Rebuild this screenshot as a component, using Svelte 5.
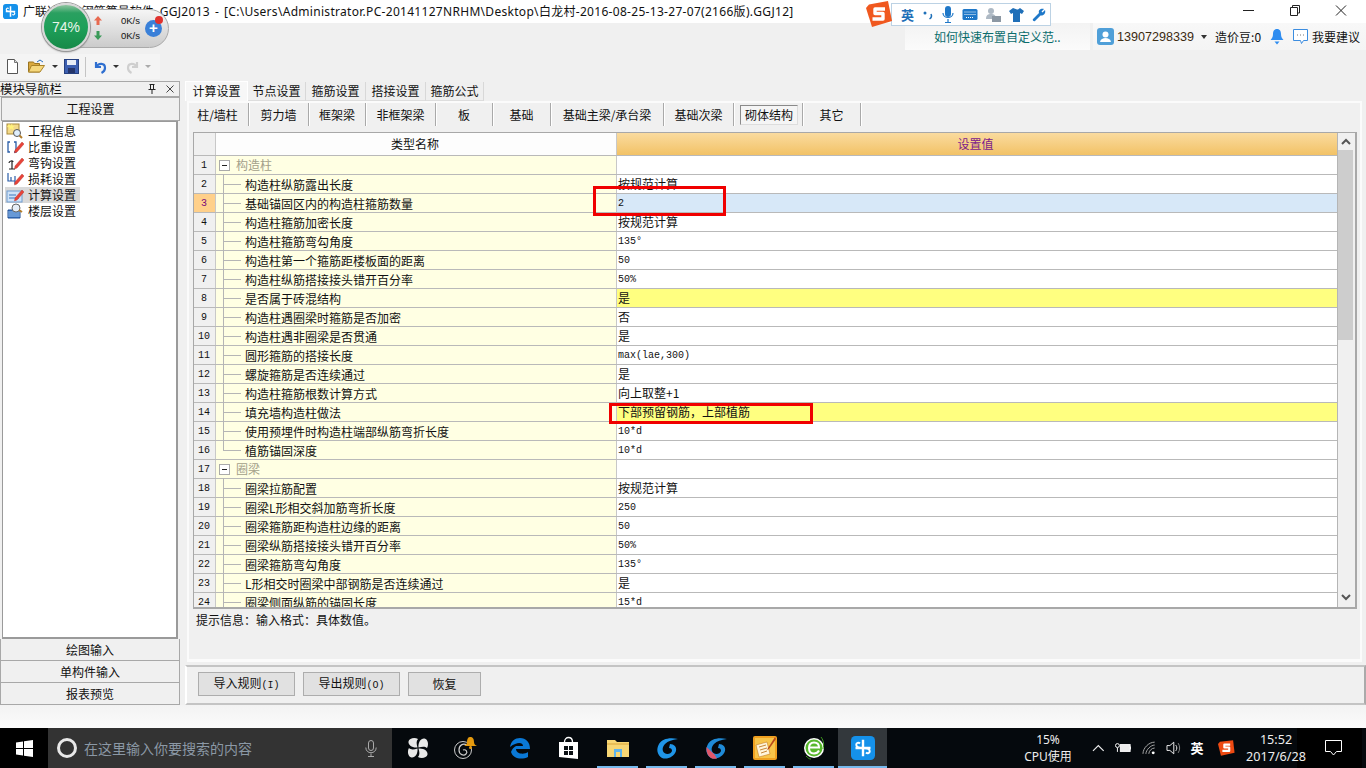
<script lang="ts">
	const tabs = ['计算设置', '节点设置', '箍筋设置', '搭接设置', '箍筋公式'];
	const tabWidths = [63, 57, 59, 59, 57];

	const subTabs = [
		['柱/墙柱', 62], ['剪力墙', 60], ['框架梁', 57], ['非框架梁', 70], ['板', 57],
		['基础', 58], ['基础主梁/承台梁', 113], ['基础次梁', 70], ['砌体结构', 69], ['其它', 58]
	] as const;

	const rows = [
		{ name: '构造柱', group: true },
		{ name: '构造柱纵筋露出长度', val: '按规范计算' },
		{ name: '基础锚固区内的构造柱箍筋数量', val: '2', mono: true, sel: true },
		{ name: '构造柱箍筋加密长度', val: '按规范计算' },
		{ name: '构造柱箍筋弯勾角度', val: '135°', mono: true },
		{ name: '构造柱第一个箍筋距楼板面的距离', val: '50', mono: true },
		{ name: '构造柱纵筋搭接接头错开百分率', val: '50%', mono: true },
		{ name: '是否属于砖混结构', val: '是', hot: true },
		{ name: '构造柱遇圈梁时箍筋是否加密', val: '否' },
		{ name: '构造柱遇非圈梁是否贯通', val: '是' },
		{ name: '圆形箍筋的搭接长度', val: 'max(lae,300)', mono: true },
		{ name: '螺旋箍筋是否连续通过', val: '是' },
		{ name: '构造柱箍筋根数计算方式', val: '向上取整+1' },
		{ name: '填充墙构造柱做法', val: '下部预留钢筋，上部植筋', hot: true },
		{ name: '使用预埋件时构造柱端部纵筋弯折长度', val: '10*d', mono: true },
		{ name: '植筋锚固深度', val: '10*d', mono: true, last: true },
		{ name: '圈梁', group: true },
		{ name: '圈梁拉筋配置', val: '按规范计算' },
		{ name: '圈梁L形相交斜加筋弯折长度', val: '250', mono: true },
		{ name: '圈梁箍筋距构造柱边缘的距离', val: '50', mono: true },
		{ name: '圈梁纵筋搭接接头错开百分率', val: '50%', mono: true },
		{ name: '圈梁箍筋弯勾角度', val: '135°', mono: true },
		{ name: 'L形相交时圈梁中部钢筋是否连续通过', val: '是' },
		{ name: '圈梁侧面纵筋的锚固长度', val: '15*d', mono: true }
	];

	const navItems = ['工程信息', '比重设置', '弯钩设置', '损耗设置', '计算设置', '楼层设置'];
</script>

{#snippet appIcon(size)}
	<svg width={size} height={size} viewBox="0 0 16 16">
		<rect width="16" height="16" rx="3" fill="#1591ea" />
		<path d="M8 2.500v11M3 8h10" stroke="#fff" stroke-width="1.600" fill="none" />
		<path d="M8 8C5 8 3.500 7 3.500 5.800S5 4 6 5M8 8c3 0 4.500 1 4.500 2.200S11 12 10 11" stroke="#fff" stroke-width="1.300" fill="none" />
	</svg>
{/snippet}

{#snippet pencil()}
	<path d="M9 11 L16 3 L18 5 L11 13 L8.500 14Z" fill="#e8443a" stroke="#b02a20" stroke-width=".4" />
{/snippet}

{#snippet navIcon(i)}
	<svg width="18" height="16" viewBox="0 0 18 16">
		{#if i === 0}
			<rect x="1" y="1" width="12" height="10" fill="#f3d98a" stroke="#a98a3a" />
			<path d="M3 1l1.500 2L6 .5 6.500 3 9 2.500 7 4.500 8 7 5 5.500 3 7.500 3.500 4.500 1 4Z" fill="#fff27a" />
			<circle cx="11" cy="10" r="3.500" fill="#dfeefc" stroke="#555" />
			<path d="M13.500 12.500L16 15" stroke="#b27d2a" stroke-width="2" />
		{:else if i === 1}
			<path d="M4 3H2v10h2M8 3h2v10H8" stroke="#2a5da8" stroke-width="1.300" fill="none" />
			{@render pencil()}
		{:else if i === 2}
			<path d="M6 6v8M3 14h6M3 8c0-2 4-3 4-1" stroke="#222" stroke-width="1.200" fill="none" />
			{@render pencil()}
		{:else if i === 3}
			<path d="M2 2v8h3V6M5 10h4V5v8" stroke="#2a5da8" stroke-width="1.200" fill="none" />
			{@render pencil()}
		{:else if i === 4}
			<rect x="1" y="4" width="15" height="11" fill="#cfe3f8" stroke="#6f9cd0" />
			<path d="M3 8h7M3 11h10" stroke="#3d76bd" />
			{@render pencil()}
		{:else}
			<path d="M2 7h12v8H2Z" fill="#3a78c8" stroke="#1f4f96" />
			<path d="M2 9h12M2 11h12M2 13h12" stroke="#bcd6f2" stroke-width=".7" />
			<circle cx="10" cy="5" r="4" fill="#e6eef7" stroke="#666" />
			<path d="M13 7l3 2" stroke="#b27d2a" stroke-width="2" />
		{/if}
	</svg>
{/snippet}

<div class="page">
	<header class="titlebar">
		<span class="app-icon">{@render appIcon(15)}</span>
		<span class="title"><span class="title-cn">广联达BIM钢筋算量软件</span> GGJ2013 - [C:\Users\Administrator.PC-20141127NRHM\Desktop\白龙村-2016-08-25-13-27-07(2166版).GGJ12]</span>
		<div class="winbtns">
			<svg width="46" height="23" viewBox="0 0 46 23"><path d="M17 10.500h11" stroke="#222" /></svg>
			<svg width="46" height="23" viewBox="0 0 46 23"><path d="M18.500 7.500h7v8h-7ZM20.500 7V5.500h7V13h-2" stroke="#222" fill="none" /></svg>
			<svg width="46" height="23" viewBox="0 0 46 23"><path d="M18 5.500l10 10M28 5.500l-10 10" stroke="#222" /></svg>
		</div>
	</header>

	<div class="band">
		<div class="link-box">如何快速布置自定义范..</div>
		<div class="user-box">
			<svg class="avatar" width="17" height="17" viewBox="0 0 17 17">
				<rect width="17" height="17" rx="3" fill="#4f9fd8" />
				<circle cx="8.500" cy="6.500" r="3" fill="#fff" />
				<path d="M3 14c.5-3 3-4 5.500-4s5 1 5.500 4Z" fill="#fff" />
			</svg>
			<span class="phone">13907298339</span>
			<span class="caret"></span>
			<span class="beans">造价豆:0</span>
			<svg class="bell" width="14" height="17" viewBox="0 0 14 17">
				<path d="M7 1c3 0 4 2.500 4 5 0 3 1 4.500 2.500 6H.5C2 10.500 3 9 3 6c0-2.500 1-5 4-5Z" fill="#2f8df0" />
				<path d="M4.500 13.500h5L7 16.500Z" fill="#2f8df0" />
			</svg>
			<svg class="note" width="17" height="17" viewBox="0 0 17 17">
				<path d="M1.500 1.500h14v11h-4l-2 3-1-3h-7Z" fill="#fff" stroke="#3c8de0" />
				<path d="M5 7h1M8 7h1M11 7h1" stroke="#777" />
			</svg>
			<span>我要建议</span>
		</div>
	</div>

	<div class="toolbar">
		<div class="tools">
			<svg width="13" height="15" viewBox="0 0 13 15"><path d="M1.500 .5h7l3 3v11h-10Z" fill="#fff" stroke="#555" /><path d="M8.500 .5v3h3" fill="#ddd" stroke="#777" /></svg>
			<svg class="gap-open" width="17" height="15" viewBox="0 0 17 15"><path d="M.5 3h5l1 1.500h5V13H.5Z" fill="#d9a93f" stroke="#9a7420" /><path d="M.5 13l3-6.500h13L12 13Z" fill="#f5d77c" stroke="#a98228" /><path d="M9 3l3-2 3 2" stroke="#2a70c0" fill="none" /></svg>
			<span class="drop d1"></span>
			<svg class="gap-save" width="15" height="15" viewBox="0 0 15 15"><rect x=".5" y=".5" width="14" height="14" fill="#3d5fb0" stroke="#26407f" /><rect x="3" y="1" width="9" height="5" fill="#e8edf6" /><rect x="4" y="9" width="7" height="5" fill="#25356a" /></svg>
			<span class="tool-sep"></span>
			<svg class="gap-undo" width="13" height="14" viewBox="0 0 13 14"><path d="M2 2v5h5M2.500 7C4 3 11 2.500 11 8c0 2-1.500 4-3.500 5" stroke="#2f6fd0" stroke-width="2.200" fill="none" /></svg>
			<span class="drop d2"></span>
			<svg class="gap-redo" width="13" height="14" viewBox="0 0 13 14"><path d="M11 2v5H6M10.500 7C9 3 2 2.500 2 8c0 2 1.500 4 3.500 5" stroke="#cfcfcf" stroke-width="2.200" fill="none" /></svg>
			<span class="drop d3"></span>
		</div>
	</div>

	<main class="main">
		<aside class="nav">
			<div class="nav-head">
				<span>模块导航栏</span>
				<svg width="12" height="12" viewBox="0 0 12 12"><path d="M3.500 1.500h5M4.500 1.500v5h3v-5M2.500 6.500h7M6 6.500V11" stroke="#222" fill="none" /></svg>
				<svg width="12" height="12" viewBox="0 0 12 12"><path d="M2.500 2.500l7 7M9.500 2.500l-7 7" stroke="#444" /></svg>
			</div>
			<div class="nav-btn first">工程设置</div>
			<ul class="nav-list">
				{#each navItems as item, i}
					<li class:on={i === 4}>
						<span class="nav-ico">{@render navIcon(i)}</span>
						<span class="nav-txt">{item}</span>
					</li>
				{/each}
			</ul>
			<div class="nav-btn">绘图输入</div>
			<div class="nav-btn">单构件输入</div>
			<div class="nav-btn">报表预览</div>
		</aside>

		<section class="work">
			<div class="tabs">
				{#each tabs as t, i}
					<div class="tab" class:active={i === 0} style="width:{tabWidths[i]}px">{t}</div>
				{/each}
			</div>
			<div class="panel">
				<div class="subtabs">
					{#each subTabs as [label, w]}
						<div class="subtab" style="width:{w}px">
							<span class:pressed={label === '砌体结构'}>{label}</span>
						</div>
					{/each}
				</div>
				<div class="grid">
					<div class="table">
						<div class="row head">
							<div class="num"></div>
							<div class="name-h">类型名称</div>
							<div class="val-h">设置值</div>
						</div>
						{#each rows as r, i}
							<div class="row">
								<div class="num" class:num-sel={r.sel}>{i + 1}</div>
								<div class="name">
									{#if r.group}
										<span class="minus"></span>
										<span class="group-txt">{r.name}</span>
									{:else}
										<span class="tree" class:tree-last={r.last}></span>
										<span class="name-txt">{r.name}</span>
									{/if}
								</div>
								<div class="val" class:sel={r.sel} class:hot={r.hot} class:mono={r.mono}>{r.val ?? ''}</div>
							</div>
						{/each}
					</div>
					<div class="scroll">
						<svg width="16" height="17" viewBox="0 0 16 17"><path d="M4 11l4-4 4 4" stroke="#555" stroke-width="2" fill="none" /></svg>
						<div class="thumb"></div>
						<svg class="down" width="16" height="18" viewBox="0 0 16 18"><path d="M4 6l4 4 4-4" stroke="#555" stroke-width="2" fill="none" /></svg>
					</div>
				</div>
				<div class="hint">提示信息：输入格式：具体数值。</div>
			</div>
			<div class="actions">
				<button class="b1">导入规则<span class="mono-s">(I)</span></button>
				<button class="b2">导出规则<span class="mono-s">(O)</span></button>
				<button class="b3">恢复</button>
			</div>
		</section>
	</main>

	<div class="strip"></div>

	<footer class="taskbar">
		<div class="start">
			<svg width="17" height="17" viewBox="0 0 17 17"><path d="M0 2.500l7-1V8H0ZM8 1.300 17 0v8H8ZM0 9h7v6.500l-7-1ZM8 9h9v8l-9-1.300Z" fill="#fff" /></svg>
		</div>
		<div class="search">
			<span class="cortana"></span>
			<span class="search-txt">在这里输入你要搜索的内容</span>
			<svg class="mic" width="12" height="17" viewBox="0 0 12 17"><rect x="3.500" y=".5" width="5" height="10" rx="2.500" fill="none" stroke="#aaa" /><path d="M.8 7.500c0 7 10.400 7 10.400 0M6 13.500V16M3 16.500h6" stroke="#aaa" fill="none" /></svg>
		</div>
		<div class="apps">
			<div class="app">
				<svg width="22" height="22" viewBox="0 0 22 22"><path d="M10.500 10.500C5 11 1 8 1.500 4.500 2 1 8 0 11 2c-2 2-1.500 5-.5 8.500ZM11.500 10.500C11 5 14 1 17.500 1.500 21 2 22 8 20 11c-2-2-5-1.500-8.500-.5ZM11.500 11.500c5.500-.5 9.500 2.500 9 6-.5 3.500-6.500 4.500-9.500 2.500 2-2 1.500-5 .5-8.500ZM10.500 11.500c.5 5.500-2.500 9.500-6 9C1 20 0 14 2 11c2 2 5 1.500 8.500.5Z" fill="#e8e8e8" /></svg>
			</div>
			<div class="app">
				<svg width="28" height="24" viewBox="0 0 28 24"><circle cx="10" cy="14" r="8.500" fill="none" stroke="#ccc" /><path d="M14 9c-4-2-8 0-8 5s5 6 7 4 0-5-3-4" fill="none" stroke="#ccc" stroke-width="1.200" /><path d="M17 1c3 0 4 2 4 5 0 2 1 3 3 4H11c2-1 3-2 3-4 0-3 1-5 3-5Z" fill="#e59a0e" /><circle cx="17.500" cy="11.500" r="1.500" fill="#e59a0e" /></svg>
			</div>
			<div class="app g2">
				<svg width="21" height="21" viewBox="0 0 21 21"><path d="M1 9C2 3 6 0 11 0c6 0 10 4 10 11H7c0 5 8 6 12 3v5c-6 3-15 2-17-5 1-3 3-5 5-6h7c0-3-5-5-13 1Z" fill="#0a78d6" /></svg>
			</div>
			<div class="app">
				<svg width="21" height="24" viewBox="0 0 21 24"><path d="M1 6h19v17L1 21Z" fill="#fff" /><path d="M6.500 6C6.500 0 14.500 0 14.500 6" fill="none" stroke="#fff" stroke-width="1.300" /><path d="M6 10h4v4H6ZM11 10h4v4h-4ZM6 15h4v4H6ZM11 15h4v4h-4Z" fill="#0b1014" /></svg>
			</div>
			<div class="app">
				<svg width="22" height="18" viewBox="0 0 22 18"><path d="M0 1h8l2 2h12v15H0Z" fill="#f7d674" /><path d="M0 4h22v2H0Z" fill="#e8bd56" /><path d="M7 10h8v8H7Z" fill="#5fb4ec" /><path d="M9 13h4v5H9Z" fill="#f7d674" /></svg>
			</div>
			<div class="app">
				<svg width="24" height="24" viewBox="0 0 24 24"><path d="M23 3C14 1 7 3 4 8 1 13 2 19 7 22c5 2 12-1 14-7 1-4-2-7-6-7l-1 4c2 0 3 1 3 3-1 3-5 4-7.500 2C7 15 7 11 10 8c3-3 7-4 13-5Z" fill="#1f95e8" /></svg>
			</div>
			<div class="app">
				<svg width="24" height="24" viewBox="0 0 24 24"><path d="M23 3C14 1 7 3 4 8 1 13 2 19 7 22c5 2 12-1 14-7 1-4-2-7-6-7l-1 4c2 0 3 1 3 3-1 3-5 4-7.500 2C7 15 7 11 10 8c3-3 7-4 13-5Z" fill="#1f8bd8" /><path d="M2.500 11l8 7.500L13 22.500C11 23 9 23 7 22 3.500 20 2 15 2.500 11Z" fill="#e0576a" /></svg>
			</div>
			<div class="app">
				<svg width="24" height="24" viewBox="0 0 24 24"><rect width="24" height="24" rx="2" fill="#f0a020" /><rect x="2" y="2" width="20" height="20" fill="#f7c44a" /><path d="M3 9l11-3 3 12-11 3Z" fill="#fff5da" stroke="#b86a10" stroke-width=".5" /><path d="M6 11l7-2M7 14l7-2M8 17l6-2" stroke="#b86a10" stroke-width=".8" /><path d="M22 1l-7 11-1 2 2-1L23 3Z" fill="#b8481a" /></svg>
			</div>
			<div class="app">
				<svg width="22" height="24" viewBox="0 0 22 24"><circle cx="11" cy="12" r="10" fill="#fff" /><circle cx="11" cy="12" r="8.500" fill="#58b82c" /><path d="M6 11.500h10c0-4-2-5-5-5-3 0-5 2-5 5.500s2 5.500 5 5.500c2 0 4-1 5-3" fill="none" stroke="#fff" stroke-width="2" /><path d="M18 1c3 4 3 8 2 12M3 20c2 2 3 3 5 3" stroke="#3f9a20" fill="none" /></svg>
			</div>
			<div class="app current">
				<span class="cur-ico">{@render appIcon(24)}</span>
			</div>
		</div>
		<div class="cpu"><span>15%</span><span>CPU使用</span></div>
		<div class="tray">
			<svg width="13" height="8" viewBox="0 0 13 8"><path d="M1 7l5.500-5.500L12 7" stroke="#eee" stroke-width="1.200" fill="none" /></svg>
			<svg class="t-bat" width="17" height="12" viewBox="0 0 17 12"><circle cx="2.500" cy="3.500" r="2" fill="none" stroke="#fff" /><path d="M2.500 6v4" stroke="#fff" /><rect x="5.500" y="2.500" width="10" height="7" fill="#eee" stroke="#fff" /><path d="M16 4.500v3" stroke="#fff" /></svg>
			<svg class="t-wifi" width="14" height="14" viewBox="0 0 14 14"><path d="M1 13C1 7 7 1 13 1M4 13c0-4 5-9 9-9M7 13c0-3 3-6 6-6" stroke="#aaa" fill="none" /><circle cx="11.500" cy="12" r="1.500" fill="#fff" /></svg>
			<svg class="t-vol" width="16" height="14" viewBox="0 0 16 14"><path d="M1 4.500h3l4-3.500v12L4 9.500H1Z" fill="none" stroke="#eee" /><path d="M10 4c1.500 2 1.500 4 0 6" stroke="#eee" fill="none" /><path d="M12.500 2c2 3 2 7 0 10" stroke="#888" fill="none" /></svg>
			<span class="t-ime">英</span>
			<svg class="t-s" width="17" height="16" viewBox="0 0 17 16"><path d="M2 1.500L15.500 0 17 13 3 16 0 4Z" fill="#ee4a12" /><path d="M12.500 4.500H6.500v3h5v3.500H4.500" stroke="#fff" stroke-width="2.200" fill="none" stroke-linejoin="round" /></svg>
		</div>
		<div class="clock"><span>15:52</span><span>2017/6/28</span></div>
		<div class="notify">
			<svg width="17" height="16" viewBox="0 0 17 16"><path d="M.5.5h16v11h-5l-3 3.500-3-3.500h-5Z" fill="none" stroke="#fff" /></svg>
		</div>
	</footer>

	<!-- 悬浮的东西 -->
	<div class="meter">
		<div class="pill">
			<div class="speed-row">
				<svg width="8" height="9" viewBox="0 0 8 9"><path d="M4 0l4 4.500H5.500V9h-3V4.500H0Z" fill="#e86a50" /></svg>
				<span>0K/s</span>
			</div>
			<div class="speed-row">
				<svg width="8" height="9" viewBox="0 0 8 9"><path d="M4 9L0 4.500h2.500V0h3v4.500H8Z" fill="#3a9a58" /></svg>
				<span>0K/s</span>
			</div>
			<div class="plus">+<i></i></div>
		</div>
		<div class="ball">74%</div>
	</div>

	<div class="ime">
		<svg class="ime-s" width="26" height="26" viewBox="0 0 26 26"><path d="M3 3.500L22 0l4 20-20 6L0 7Z" fill="#f0581f" /><path d="M19 8H9v4.500h8V18H6.500" stroke="#fff" stroke-width="3.400" fill="none" stroke-linejoin="round" /></svg>
		<div class="ime-bar">
			<span class="ime-en">英</span>
			<svg width="12" height="12" viewBox="0 0 12 12"><circle cx="3" cy="4" r="1.500" fill="#1f70b8" /><path d="M9 5c1 2 0 4-1.500 5" stroke="#1f70b8" stroke-width="1.500" fill="none" /></svg>
			<svg width="12" height="17" viewBox="0 0 12 17"><rect x="3" y="0" width="6" height="11" rx="3" fill="#1f78c8" /><path d="M1 7c0 6 10 6 10 0M6 13v3M3 16.500h6" stroke="#1f78c8" fill="none" stroke-width="1.200" /></svg>
			<svg width="16" height="13" viewBox="0 0 16 13"><rect x=".5" y="1" width="15" height="11" rx="1.500" fill="#1f78c8" /><path d="M2.500 4h11M2.500 6.500h11M4 9.500h8" stroke="#fff" stroke-dasharray="1 1" /></svg>
			<svg width="16" height="16" viewBox="0 0 16 16"><circle cx="6" cy="4" r="3" fill="#aeb9c4" /><path d="M1 12c0-4 2-5 5-5s5 1 5 5Z" fill="#aeb9c4" /><rect x="7" y="9" width="9" height="6" fill="#8c98a4" /></svg>
			<svg width="15" height="14" viewBox="0 0 15 14"><path d="M4 0L0 3l2 3 2-1v9h7V5l2 1 2-3-4-3-2 1.500h-1Z" fill="#1f6fb8" /></svg>
			<svg width="14" height="14" viewBox="0 0 14 14"><path d="M1 11l6-6c-1-3 2-5 5-4L9.500 3.500l1 1L13 2c1 3-1 6-4.500 5.500L3 13c-1 1-3-1-2-2Z" fill="#1f78c8" /></svg>
		</div>
	</div>

	<div class="mark mark-a"></div>
	<div class="mark mark-b"></div>
</div>

<style>
	:global(body) {
		margin: 0;
		background: #f0f0f0;
	}

	.page {
		position: relative;
		width: 1366px;
		height: 768px;
		overflow: hidden;
		display: flex;
		flex-direction: column;
		background: #f0f0f0;
		color: #111;
		font-family: "Noto Sans CJK SC", "Liberation Sans", sans-serif;
		font-size: 12px;
		line-height: 18px;
	}

	/* 标题栏 */
	.titlebar {
		height: 23px;
		flex: none;
		display: flex;
		align-items: center;
		background: #fff;
		padding-left: 3px;
	}
	.app-icon {
		display: flex;
		width: 20px;
	}
	.title {
		font-size: 12px;
		white-space: pre;
		font-family: "Noto Sans", "Noto Sans CJK SC", sans-serif;
		letter-spacing: 0.3px;
		word-spacing: 1.5px;
	}
	.title-cn {
		letter-spacing: 0;
		margin-right: 1px;
	}
	.winbtns {
		margin-left: auto;
		display: flex;
		padding-right: 2px;
	}

	.band {
		height: 28px;
		flex: none;
		display: flex;
		justify-content: flex-end;
	}
	.link-box {
		width: 156px;
		padding-left: 29px;
		margin-right: 3px;
		height: 27px;
		line-height: 28px;
		color: #0b6d6d;
		background: linear-gradient(#f3f3f3, #fbfbfb);
	}
	.user-box {
		width: 273px;
		height: 27px;
		display: flex;
		align-items: center;
		padding-left: 4px;
		box-sizing: border-box;
		background: linear-gradient(#f8f8f8, #f4f4f4);
	}
	.phone {
		margin-left: 3px;
		font-family: "Liberation Sans", sans-serif;
		font-size: 12.6px;
		color: #3c2a10;
	}
	.caret {
		margin-left: 7px;
		border: 3px solid transparent;
		border-top: 4px solid #333;
		border-bottom: 0;
	}
	.beans {
		margin-left: 8px;
	}
	.bell {
		margin-left: 9px;
	}
	.note {
		margin-left: 8px;
		margin-right: 3px;
	}

	.toolbar {
		height: 29px;
		flex: none;
		padding-top: 3px;
		box-sizing: border-box;
	}
	.tools {
		width: 160px;
		height: 25px;
		display: flex;
		align-items: center;
		background: #f4f4f4;
		padding-left: 6px;
		box-sizing: border-box;
	}
	.gap-open {
		margin-left: 9px;
	}
	.drop {
		border: 3px solid transparent;
		border-top: 3px solid #333;
		border-bottom: 0;
		margin-left: 6px;
	}
	.d1 {
		margin-left: 7px;
	}
	.d3 {
		border-top-color: #aaa;
	}
	.gap-save {
		margin-left: 6px;
	}
	.tool-sep {
		width: 1px;
		height: 20px;
		background: #c4c4c4;
		margin: 0 8px 0 6px;
	}
	.gap-redo {
		margin-left: 7px;
	}

	/* 主体 */
	.main {
		height: 625px;
		flex: none;
		display: flex;
	}

	.nav {
		width: 180px;
		flex: none;
		display: flex;
		flex-direction: column;
		box-sizing: border-box;
	}
	.nav-head {
		height: 16px;
		margin-top: 1px;
		display: flex;
		align-items: center;
		gap: 6px;
		border: 1px solid #a8a8a8;
		border-left: 0;
		box-sizing: border-box;
		padding-right: 3px;
		line-height: 16px;
		background: #f0f0f0;
	}
	.nav-head span {
		margin-right: auto;
		font-size: 12.400px;
	}
	.nav-btn {
		height: 22px;
		flex: none;
		border: 1px solid #a8a8a8;
		border-top: 0;
		line-height: 21px;
		text-align: center;
		box-sizing: border-box;
	}
	.nav-btn.first {
		height: 24px;
		border-top: 1px solid #a8a8a8;
		line-height: 22px;
		margin-left: 1px;
	}
	.nav-list {
		flex: 1;
		margin: 0 2px;
		list-style: none;
		background: #fff;
		border: 1px solid #9a9a9a;
		border-width: 1px 2px 2px 1px;
		padding: 1px 0 0 2px;
	}
	.nav-list li {
		height: 16px;
		width: 75px;
		display: flex;
		align-items: center;
		line-height: 16px;
	}
	.nav-list li.on {
		background: #d9d9d9;
	}
	.nav-ico {
		display: flex;
		width: 23px;
		flex: none;
		padding-left: 1px;
		box-sizing: border-box;
	}

	.work {
		flex: 1;
		min-width: 0;
		padding-left: 5px;
		display: flex;
		flex-direction: column;
	}
	.tabs {
		height: 20px;
		display: flex;
		flex: none;
		margin-top: 1px;
	}
	.tab {
		text-align: center;
		height: 18px;
		margin-top: 1px;
		line-height: 18px;
		background: #efefef;
		border-right: 1px solid #d8d8d8;
		border-bottom: 1px solid #ddd;
		box-sizing: content-box;
	}
	.tab.active {
		margin-top: 0;
		background: #f7f7f7;
		border: 1px solid #fff;
		border-bottom: 0;
		box-sizing: border-box;
		height: 20px;
	}
	.panel {
		height: 561px;
		flex: none;
		margin: 0 4px 0 2px;
		border: 2px solid #fbfbfb;
		border-bottom-width: 3px;
		box-sizing: border-box;
		padding: 0 3px 0 4px;
		display: flex;
		flex-direction: column;
	}
	.subtabs {
		display: flex;
		height: 24px;
		flex: none;
		margin: 0 0 5px -6px;
		line-height: 16px;
	}
	.subtab {
		display: flex;
		align-items: center;
		justify-content: center;
		box-sizing: border-box;
		border-right: 1px solid #a9a9a9;
		height: 23px;
		box-shadow: 1px 0 0 #fff;
	}
	.subtab .pressed {
		display: block;
		width: 58px;
		height: 20px;
		line-height: 17px;
		text-align: center;
		border: 1px solid #8a8a8a;
		border-right-color: #ddd;
		border-bottom-color: #ddd;
		box-sizing: border-box;
		background: #f5f5f5;
		margin-left: 2px;
	}

	.grid {
		height: 477px;
		flex: none;
		display: flex;
		border: 1px solid #a8a8a8;
		border-width: 1px 2px 2px 1px;
		box-sizing: border-box;
		overflow: hidden;
		background: #fff;
	}
	.table {
		flex: 1;
		min-width: 0;
		border-right: 1px solid #b5b5b5;
	}
	.row {
		display: grid;
		grid-template-columns: 22px 400px 1fr;
		grid-template-rows: 18px;
		height: 19px;
		box-sizing: border-box;
		border-bottom: 1px solid #b9b9b9;
	}
	.row.head {
		height: 23px;
		grid-template-rows: 22px;
	}
	.num {
		background: #f0f0f0;
		border-right: 1px solid #c8c8c8;
		text-align: center;
		font-family: "Liberation Mono", monospace;
		font-size: 10px;
		line-height: 20px;
		padding-right: 1px;
		box-sizing: border-box;
	}
	.num-sel {
		background: #ffd08a;
		color: #7a0a7a;
	}
	.name-h {
		background: #fdfdfd;
		text-align: center;
		line-height: 22px;
		padding-right: 2px;
	}
	.val-h {
		background: linear-gradient(#fadb9f, #f2c266);
		color: #7b1a8c;
		text-align: center;
		line-height: 22px;
		border-left: 1px solid #c8c8c8;
		padding-right: 3px;
	}
	.name {
		position: relative;
		background: #ffffe3;
		display: flex;
		align-items: center;
	}
	.tree {
		position: absolute;
		left: 7px;
		top: -1px;
		bottom: -1px;
		width: 17px;
		border-left: 1px solid #b5b5b5;
	}
	.tree::after {
		content: '';
		position: absolute;
		left: 0;
		right: 0;
		top: 10px;
		border-top: 1px solid #b5b5b5;
	}
	.tree-last {
		bottom: 8px;
	}
	.name-txt {
		margin-left: 29px;
		white-space: nowrap;
		line-height: 20px;
		height: 18px;
	}
	.minus {
		width: 9px;
		height: 9px;
		margin-left: 3px;
		border: 1px solid #aaa;
		background: #fff;
		position: relative;
		flex: none;
	}
	.minus::after {
		content: '';
		position: absolute;
		left: 2px;
		right: 2px;
		top: 4px;
		border-top: 1px solid #222;
	}
	.group-txt {
		margin-left: 6px;
		color: #a3a08a;
	}
	.val {
		background: #fff;
		border-left: 1px solid #c8c8c8;
		padding-left: 1px;
		white-space: nowrap;
	}
	.val.mono {
		font-family: "Liberation Mono", monospace;
		font-size: 10px;
		line-height: 20px;
	}
	.val.sel {
		background: #d7e8f8;
	}
	.val.hot {
		background: #ffff80;
	}

	.scroll {
		width: 17px;
		flex: none;
		background: #f0f0f0;
		display: flex;
		flex-direction: column;
		position: relative;
	}
	.thumb {
		height: 190px;
		width: 15px;
		background: #cdcdcd;
	}
	.down {
		margin-top: auto;
	}

	.hint {
		margin-top: 2px;
		padding-left: 3px;
		font-size: 12px;
	}
	.mono-s {
		font-family: "Liberation Mono", monospace;
		font-size: 10px;
	}

	.actions {
		flex: 1;
		margin-top: 3px;
		border-top: 2px solid #c4c4c4;
		border-bottom: 2px solid #c4c4c4;
		border-left: 2px solid #fff;
		border-right: 2px solid #aaa;
		display: flex;
		align-items: flex-start;
		padding: 5px 0 0 11px;
		gap: 8px;
		box-sizing: border-box;
	}
	button {
		height: 24px;
		padding: 0;
		background: #e1e1e1;
		border: 1px solid #adadad;
		font: inherit;
		color: #111;
		line-height: 20px;
		box-sizing: border-box;
	}
	.b1,
	.b2 {
		width: 97px;
	}
	.b3 {
		width: 73px;
	}

	.strip {
		height: 23px;
		flex: none;
		background: linear-gradient(#f3f3f3, #fbfbfb);
	}

	/* 任务栏 */
	.taskbar {
		height: 40px;
		flex: none;
		display: flex;
		align-items: stretch;
		background: #05090d;
		color: #eee;
	}
	.start {
		width: 48px;
		flex: none;
		background: #000;
		display: flex;
		align-items: center;
		justify-content: center;
	}
	.search {
		width: 344px;
		flex: none;
		background: #333;
		display: flex;
		align-items: center;
		padding-left: 9px;
		box-sizing: border-box;
	}
	.cortana {
		width: 14px;
		height: 14px;
		border-radius: 50%;
		border: 3px solid #e8e8e8;
		flex: none;
	}
	.search-txt {
		margin-left: 7px;
		font-size: 14px;
		color: #8b98a5;
		margin-right: auto;
	}
	.mic {
		margin-right: 15px;
	}
	.apps {
		display: flex;
		width: 499px;
		flex: none;
		padding-left: 1px;
		box-sizing: border-box;
	}
	.app {
		width: 49px;
		flex: none;
		display: flex;
		align-items: center;
		justify-content: center;
		position: relative;
	}
	.app:nth-child(n + 5)::after {
		content: '';
		position: absolute;
		left: 4px;
		right: 4px;
		bottom: 0;
		height: 2px;
		background: #76b9ed;
	}
	.g2 {
		margin-left: 4px;
	}
	.current {
		background: #33383c;
	}
	.current::after {
		left: 0 !important;
		right: 0 !important;
	}
	.cur-ico {
		display: flex;
	}
	.cpu,
	.clock {
		display: flex;
		flex-direction: column;
		align-items: center;
		justify-content: center;
		line-height: 17px;
		font-size: 12.6px;
		font-family: "Noto Sans", "Noto Sans CJK SC", sans-serif;
	}
	.cpu {
		width: 80px;
		flex: none;
		font-size: 12px;
		margin-left: 117px;
	}
	.tray {
		display: flex;
		align-items: center;
		padding-left: 4px;
		width: 147px;
		box-sizing: border-box;
		flex: none;
	}
	.t-bat {
		margin-left: 10px;
	}
	.t-wifi {
		margin-left: 11px;
	}
	.t-vol {
		margin-left: 10px;
	}
	.t-ime {
		margin-left: 9px;
		color: #fff;
		font-weight: 700;
		font-size: 13px;
	}
	.t-s {
		margin-left: 15px;
	}
	.clock {
		width: 66px;
		flex: none;
		margin-left: 8px;
		background: linear-gradient(90deg, transparent 54px, #000 54px);
	}
	.notify {
		flex: 1;
		display: flex;
		align-items: center;
		justify-content: center;
		padding-right: 4px;
		box-sizing: border-box;
		background: #000;
		border-right: 4px solid #05090d;
	}

	/* 悬浮球 */
	.meter {
		position: absolute;
		left: 41px;
		top: 3px;
		width: 128px;
		height: 50px;
	}
	.ball {
		position: absolute;
		left: 1px;
		top: 0;
		width: 48px;
		height: 48px;
		border-radius: 50%;
		box-sizing: border-box;
		border: 2px solid #d8d8d8;
		box-shadow: 0 0 0 1px #999, 0 1px 2px #777;
		background: linear-gradient(#8fc5a0 0, #2aa060 18%, #1fa05a 50%, #168a48 100%);
		color: #e8f5ea;
		font-family: "Liberation Sans", sans-serif;
		font-size: 14px;
		line-height: 44px;
		text-align: center;
	}
	.pill {
		position: absolute;
		left: 19px;
		right: 0;
		top: 6px;
		height: 39px;
		border-radius: 20px;
		border: 1px solid #aaa;
		box-sizing: border-box;
		background: linear-gradient(#f5f5f5, #cbcbcb);
		padding: 3px 0 0 33px;
	}
	.speed-row {
		width: 46px;
		height: 15px;
		display: flex;
		align-items: center;
		justify-content: space-between;
		font-family: "Liberation Sans", sans-serif;
		font-size: 9.5px;
		line-height: 15px;
	}
	.plus {
		position: absolute;
		left: 84px;
		top: 10px;
		width: 17px;
		height: 17px;
		border-radius: 50%;
		background: #3a80d8;
		color: #fff;
		font: 700 15px/16px "Liberation Sans", sans-serif;
		text-align: center;
	}
	.plus i {
		position: absolute;
		left: 10px;
		top: -4px;
		width: 8px;
		height: 8px;
		border-radius: 50%;
		background: #e0322e;
	}

	/* 输入法 */
	.ime {
		position: absolute;
		left: 866px;
		top: 1px;
		display: flex;
		align-items: flex-start;
	}
	.ime-s {
		position: relative;
		z-index: 1;
	}
	.ime-bar {
		margin: 2px 0 0 -1px;
		width: 160px;
		height: 23px;
		display: flex;
		align-items: center;
		justify-content: space-between;
		padding: 0 4px 0 9px;
		box-sizing: border-box;
		background: #fff;
		border: 1px solid #bcd2e4;
	}
	.ime-en {
		color: #1f70b8;
		font-weight: 700;
		font-size: 13px;
	}

	/* 红框标注 */
	.mark {
		position: absolute;
		box-sizing: border-box;
		border: 3px solid #f00000;
		pointer-events: none;
	}
	.mark-a {
		left: 593px;
		top: 186px;
		width: 133px;
		height: 30px;
	}
	.mark-b {
		left: 609px;
		top: 403px;
		width: 204px;
		height: 21px;
	}
</style>
